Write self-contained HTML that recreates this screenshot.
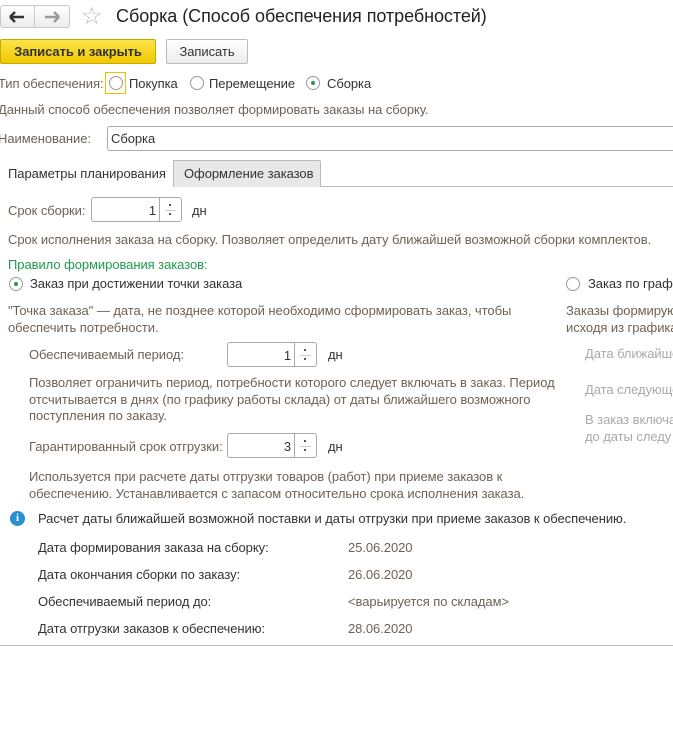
<!DOCTYPE html>
<html><head><meta charset="utf-8"><style>
body{margin:0;width:673px;height:731px;overflow:hidden;background:#fff;font-family:"Liberation Sans",Arial,sans-serif;font-size:13px;letter-spacing:-0.06px;color:#333;position:relative}
.a{position:absolute;white-space:nowrap}
.d{color:#6e6256}
.g{color:#a9a9a9}
.rad{position:absolute;width:12px;height:12px;border:1px solid #9a9a9a;border-radius:50%;background:#fff}
.rad.on::after{content:"";position:absolute;left:4px;top:4px;width:4px;height:4px;border-radius:50%;background:#1a9a4a}
.inp{position:absolute;border:1px solid #aaa;border-radius:3px;background:#fff;box-sizing:border-box}
.spin{position:absolute;right:0;top:0;bottom:0;width:21px;border-left:1px solid #aaa}
.spin::before{content:"";position:absolute;left:5px;right:5px;top:50%;border-top:1px solid #ccc}
.spin i{position:absolute;left:9px;width:2px;height:2px;background:#555}
</style></head><body>
<div class="a" style="left:0;top:5px;width:70px;height:23px;border:1px solid #c8c8c8;border-radius:3px;box-sizing:border-box;background:linear-gradient(#fff,#ececec)"></div>
<div class="a" style="left:34px;top:6px;width:1px;height:21px;background:#ccc"></div>
<svg class="a" style="left:9px;top:10px" width="16" height="14"><path d="M1 7H15M1 7L6 2M1 7L6 12" stroke="#333" stroke-width="2.4" fill="none"/></svg>
<svg class="a" style="left:44px;top:10px" width="16" height="14"><path d="M1 7H15M15 7L10 2M15 7L10 12" stroke="#999" stroke-width="2.4" fill="none"/></svg>
<div class="a" style="left:81px;top:2px;font-size:24px;color:#bbb">&#9734;</div>
<div class="a" style="left:116px;top:6px;font-size:18px;color:#222">Сборка (Способ обеспечения потребностей)</div>
<div class="a" style="left:0;top:39px;width:156px;height:25px;border:1px solid #c9a800;border-radius:2px;box-sizing:border-box;background:linear-gradient(#fbe34a,#f1c800);font-weight:bold;color:#333;text-align:center;line-height:23px">Записать и закрыть</div>
<div class="a" style="left:166px;top:39px;width:82px;height:25px;border:1px solid #bcbcbc;border-radius:2px;box-sizing:border-box;background:linear-gradient(#fff,#ececec);text-align:center;line-height:23px">Записать</div>
<div class="a d" style="left:-2px;top:76px">Тип обеспечения:</div>
<div class="a" style="left:105px;top:72px;width:21px;height:22px;border:1px solid #f0c000;box-sizing:border-box"></div>
<div class="rad" style="left:109px;top:76px"></div>
<div class="a" style="left:129px;top:76px">Покупка</div>
<div class="rad" style="left:190px;top:76px"></div>
<div class="a" style="left:209px;top:76px">Перемещение</div>
<div class="rad on" style="left:306px;top:76px"></div>
<div class="a" style="left:327px;top:76px">Сборка</div>
<div class="a d" style="left:-2px;top:102px">Данный способ обеспечения позволяет формировать заказы на сборку.</div>
<div class="a d" style="left:-2px;top:131px">Наименование:</div>
<div class="inp" style="left:107px;top:126px;width:570px;height:25px"></div>
<div class="a" style="left:111px;top:131px">Сборка</div>
<div class="a" style="left:0;top:186px;width:673px;height:1px;background:#bbb"></div>
<div class="a" style="left:173px;top:160px;width:148px;height:27px;border:1px solid #bbb;border-bottom:none;background:#e8e8e8;box-sizing:border-box;border-radius:2px 2px 0 0"></div>
<div class="a" style="left:0;top:160px;width:174px;height:27px;background:#fff;border-right:1px solid #bbb;box-sizing:border-box"></div>
<div class="a" style="left:8px;top:166px">Параметры планирования</div>
<div class="a" style="left:184px;top:166px">Оформление заказов</div>
<div class="a d" style="left:8px;top:203px">Срок сборки:</div>
<div class="inp" style="left:91px;top:197px;width:91px;height:25px"><div class="a" style="right:25px;top:5px">1</div><div class="spin"><i style="top:6px"></i><i style="top:15px"></i></div></div>
<div class="a" style="left:192px;top:203px">дн</div>
<div class="a d" style="left:8px;top:232px">Срок исполнения заказа на сборку. Позволяет определить дату ближайшей возможной сборки комплектов.</div>
<div class="a" style="left:8px;top:257px;color:#1f9a4e">Правило формирования заказов:</div>
<div class="rad on" style="left:9px;top:277px"></div>
<div class="a" style="left:30px;top:276px">Заказ при достижении точки заказа</div>
<div class="rad" style="left:566px;top:277px"></div>
<div class="a" style="left:588px;top:276px">Заказ по графику</div>
<div class="a d" style="left:8px;top:303px;line-height:16.5px">"Точка заказа" — дата, не позднее которой необходимо сформировать заказ, чтобы<br>обеспечить потребности.</div>
<div class="a d" style="left:566px;top:303px;line-height:16.5px">Заказы формируются<br>исходя из графика</div>
<div class="a d" style="left:29px;top:347px">Обеспечиваемый период:</div>
<div class="inp" style="left:227px;top:342px;width:90px;height:25px"><div class="a" style="right:25px;top:5px">1</div><div class="spin"><i style="top:6px"></i><i style="top:15px"></i></div></div>
<div class="a" style="left:328px;top:347px">дн</div>
<div class="a d" style="left:29px;top:375px;line-height:16.5px">Позволяет ограничить период, потребности которого следует включать в заказ. Период<br>отсчитывается в днях (по графику работы склада) от даты ближайшего возможного<br>поступления по заказу.</div>
<div class="a g" style="left:585px;top:346px">Дата ближайшей</div>
<div class="a g" style="left:585px;top:382px">Дата следующей</div>
<div class="a g" style="left:585px;top:412px;line-height:16.5px">В заказ включа<br>до даты следу</div>
<div class="a d" style="left:29px;top:439px">Гарантированный срок отгрузки:</div>
<div class="inp" style="left:227px;top:433px;width:90px;height:25px"><div class="a" style="right:25px;top:5px">3</div><div class="spin"><i style="top:6px"></i><i style="top:15px"></i></div></div>
<div class="a" style="left:328px;top:439px">дн</div>
<div class="a d" style="left:29px;top:469px;line-height:16.5px">Используется при расчете даты отгрузки товаров (работ) при приеме заказов к<br>обеспечению. Устанавливается с запасом относительно срока исполнения заказа.</div>
<div class="a" style="left:10px;top:511px;width:15px;height:15px;border-radius:50%;background:#2a8fd0;color:#fff;font-weight:bold;font-size:11px;text-align:center;line-height:15px;font-family:'Liberation Serif',serif">i</div>
<div class="a" style="left:38px;top:511px">Расчет даты ближайшей возможной поставки и даты отгрузки при приеме заказов к обеспечению.</div>
<div class="a" style="left:38px;top:540px">Дата формирования заказа на сборку:</div>
<div class="a" style="left:38px;top:567px">Дата окончания сборки по заказу:</div>
<div class="a" style="left:38px;top:594px">Обеспечиваемый период до:</div>
<div class="a" style="left:38px;top:621px">Дата отгрузки заказов к обеспечению:</div>
<div class="a d" style="left:348px;top:540px">25.06.2020</div>
<div class="a d" style="left:348px;top:567px">26.06.2020</div>
<div class="a d" style="left:348px;top:594px">&lt;варьируется по складам&gt;</div>
<div class="a d" style="left:348px;top:621px">28.06.2020</div>
<div class="a" style="left:0;top:645px;width:673px;height:1px;background:#bbb"></div>
</body></html>
